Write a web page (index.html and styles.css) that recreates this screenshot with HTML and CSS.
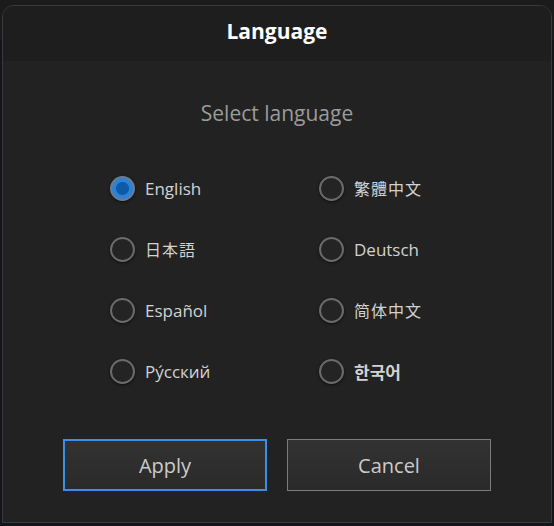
FILE: index.html
```html
<!DOCTYPE html>
<html lang="en">
<head>
    <meta charset="UTF-8">
    <title>Language</title>
    <link rel="stylesheet" href="styles.css">
</head>
<body>
    <div class="dialog">
        <div class="dialog-title">Language</div>
        <div class="dialog-body">
            <p class="hint">Select language</p>
            <div class="lang-grid">
                <label class="lang-option"><span class="radio checked"></span><span>English</span></label>
                <label class="lang-option"><span class="radio"></span><span class="tc">繁體中文</span></label>
                <label class="lang-option"><span class="radio"></span><span class="jp">日本語</span></label>
                <label class="lang-option"><span class="radio"></span><span>Deutsch</span></label>
                <label class="lang-option"><span class="radio"></span><span>Español</span></label>
                <label class="lang-option"><span class="radio"></span><span class="sc">简体中文</span></label>
                <label class="lang-option"><span class="radio"></span><span>Ру́сский</span></label>
                <label class="lang-option"><span class="radio"></span><span class="kr">한국어</span></label>
            </div>
            <div class="actions">
                <button class="btn primary">Apply</button>
                <button class="btn">Cancel</button>
            </div>
        </div>
    </div>
</body>
</html>
```

FILE: styles.css
```css
* {
    margin: 0;
    padding: 0;
    box-sizing: border-box;
}

body {
    font-family: 'Open Sans', 'Noto Sans', sans-serif;
    background: #12161c;
    padding: 5px 2px 0 2px;
    height: 526px;
    overflow: hidden;
    position: relative;
}

body::before {
    content: "";
    position: absolute;
    left: 0;
    right: 0;
    top: 0;
    height: 40px;
    background: #1b1b1b;
}

.dialog {
    position: relative;
    width: 550px;
    height: 518px;
    border: 1px solid #3a3a3a;
    border-radius: 12px 12px 0 0;
    background: #222222;
    overflow: hidden;
}

.dialog-title {
    height: 55px;
    background: #1e1e1e;
    color: #ffffff;
    font-weight: 700;
    font-size: 21px;
    text-align: center;
    line-height: 50px;
}

.hint {
    margin-top: 39px;
    text-align: center;
    color: #9b9b9b;
    font-size: 21px;
    line-height: 26px;
}

.lang-grid {
    display: grid;
    grid-template-columns: 209px 150px;
    grid-auto-rows: 61px;
    margin: 49px 0 0 107px;
}

.lang-option {
    display: flex;
    align-items: center;
    gap: 10px;
    height: 26px;
    color: #d2d2d2;
    font-size: 17px;
}

.radio {
    width: 25px;
    height: 25px;
    border-radius: 50%;
    border: 2px solid #6b6b6b;
    background: #242424;
    box-shadow: 0 1px 3px rgba(0, 0, 0, 0.6);
}

.radio.checked {
    border-color: #6a7c8e;
    background: radial-gradient(circle, #0d5aa6 0, #0d5aa6 6px, #2b82d8 7px);
}

.tc { font-family: 'Noto Sans CJK TC', sans-serif; font-size: 16px; letter-spacing: 1px; }
.sc { font-family: 'Noto Sans CJK SC', sans-serif; font-size: 16px; letter-spacing: 1px; }
.jp { font-family: 'Noto Sans CJK JP', sans-serif; font-size: 16px; letter-spacing: 1px; }
.kr { font-family: 'Noto Sans CJK KR', sans-serif; font-size: 17px; font-weight: 700; }

.actions {
    display: flex;
    gap: 20px;
    margin: 20px 0 0 60px;
}

.btn {
    width: 204px;
    height: 52px;
    font-family: inherit;
    font-size: 20px;
    color: #cbcbcb;
    background: linear-gradient(#323232, #2a2a2a);
    border: 1px solid #7c7c7c;
}

.btn.primary {
    border: 2px solid #3a8fe6;
}
```
